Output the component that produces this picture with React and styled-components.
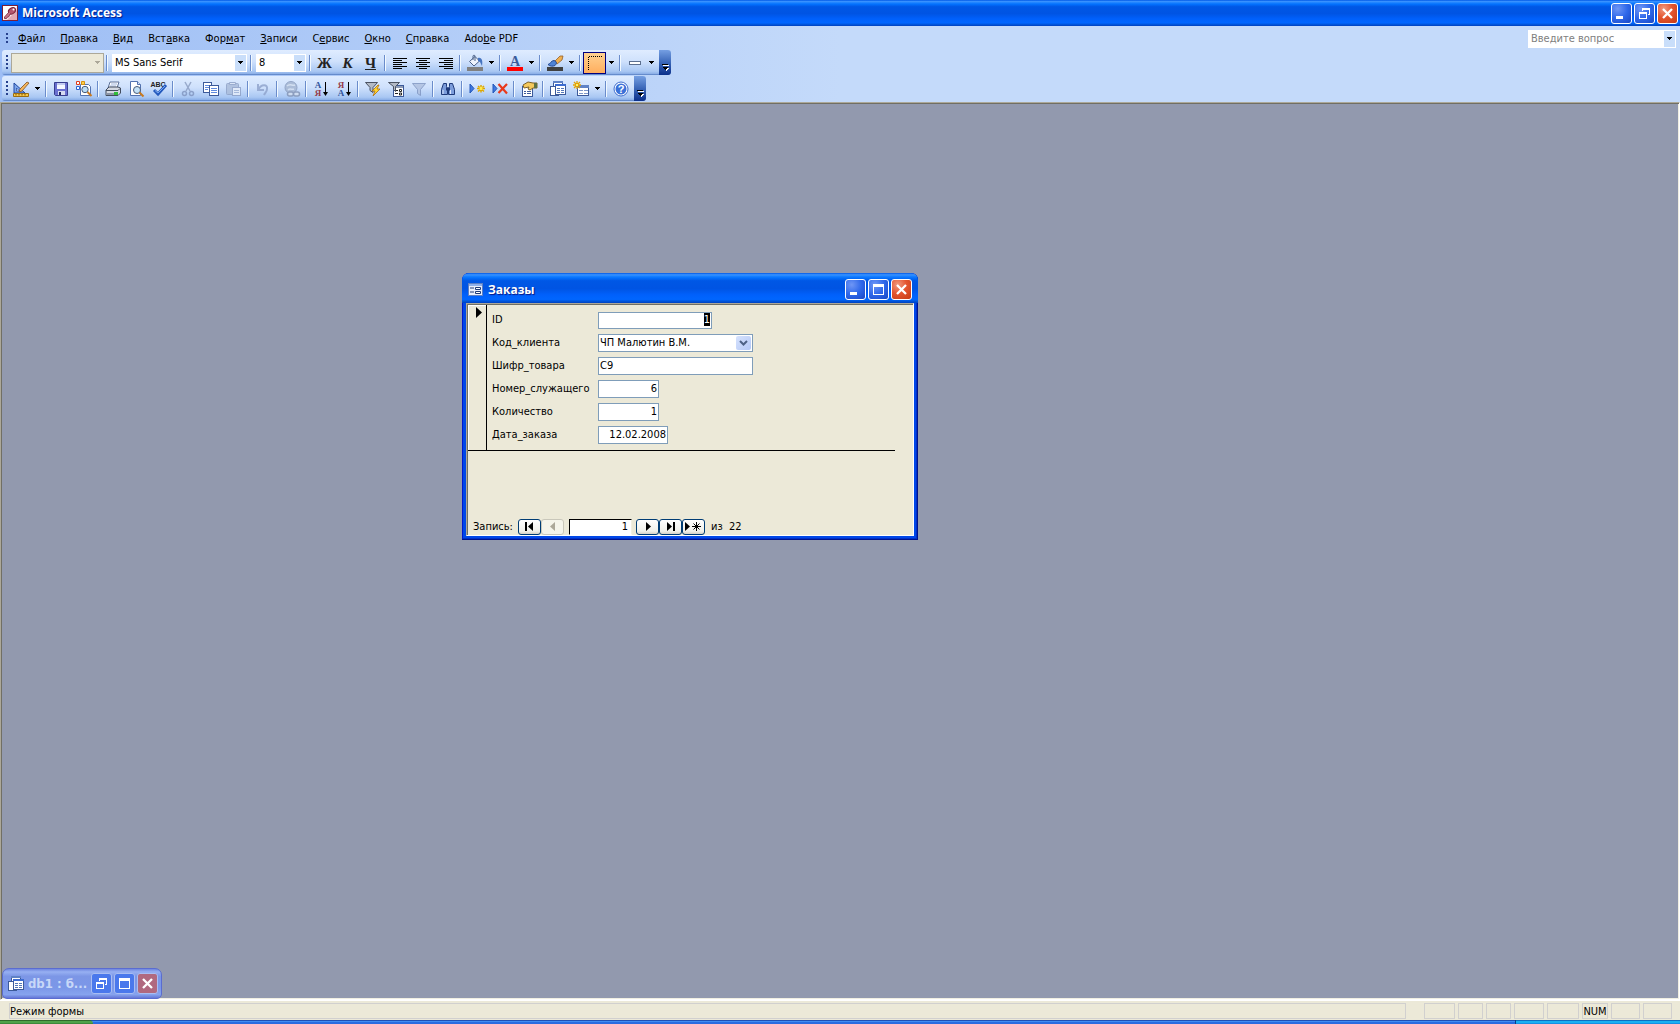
import React, { Component, createRef } from 'react'
import styled, { createGlobalStyle, css } from 'styled-components'

const uiFont = '"DejaVu Sans Condensed", "Liberation Sans", sans-serif'
const titleFont = '"Open Sans", "Noto Sans", sans-serif'

const GlobalStyle = createGlobalStyle`
    * {
        box-sizing: border-box;
    }

    body {
        margin: 0;
        font: 11px/14px ${uiFont};
        color: #000;
    }

    svg {
        display: block;
        overflow: visible;
    }

    button, input, select {
        font: inherit;
        color: inherit;
        margin: 0;
        padding: 0;
        border: 0;
        outline: none;
    }
`

const Screen = styled.div`
    display: flex;
    flex-direction: column;
    height: 100vh;
    background: #ece9d8;
    overflow: hidden;
`

/* ---------- window chrome ---------- */

const blueTitle = css`
    background: linear-gradient(180deg, #0058e6 0%, #3a93ff 6%, #127dff 12%, #036ffc 17%, #0057e5 26%, #0054e3 52%, #0060fb 72%, #0066ff 88%, #0052d6 95%, #0040c0 100%);
`

const AppTitle = styled.header`
    ${blueTitle}
    display: flex;
    align-items: center;
    gap: 4px;
    height: 26px;
    padding: 0 2px;
    flex: none;
`

const TitleText = styled.h1`
    flex: 1;
    margin: 0;
    font: bold 12px/20px ${titleFont};
    color: #fff;
    text-shadow: 1px 1px 1px #0a1883;
    white-space: nowrap;
`

const MinimizedTitle = styled.h2`
    flex: 1;
    margin: 0;
    font: bold 13px/20px ${uiFont};
    color: #c8d8f8;
    white-space: nowrap;
`

const WindowButtons = styled.div`
    display: flex;
    gap: 2px;
`

const CaptionButton = styled.button`
    width: 21px;
    height: 21px;
    display: grid;
    place-items: center;
    border: 1px solid ${props => props.$faded ? '#a9bdf2' : '#fff'};
    border-radius: 3px;
    background: ${props => props.$close
        ? (props.$faded ? '#b0697f' : 'radial-gradient(circle at 30% 25%, #f09a80 0%, #e4552f 45%, #c53a12 100%)')
        : (props.$faded ? '#4a78ec' : 'radial-gradient(circle at 30% 25%, #6f96f5 0%, #2f68ea 50%, #1846c4 100%)')};
`

/* ---------- menu and toolbars ---------- */

const Dock = styled.div`
    flex: none;
    display: flex;
    flex-direction: column;
    align-items: flex-start;
    height: 76px;
    background: linear-gradient(90deg, #9ebef5 0%, #c4dafa 50%);
`

const MenuBar = styled.nav`
    align-self: stretch;
    display: flex;
    align-items: center;
    height: 25px;
    padding: 1px 3px 0 6px;
`

const MenuItems = styled.div`
    flex: 1;
    display: flex;
    padding-left: 2px;
`

const MenuItem = styled.button`
    padding: 0 8px 0 7px;
    background: none;
    white-space: nowrap;
`

const Grip = styled.i`
    width: 3px;
    height: ${props => props.$short ? 12 : 16}px;
    background: repeating-linear-gradient(180deg, #27418d 0 2px, transparent 2px 4px);
    background-size: 2px 100%;
    background-repeat: no-repeat;
`

const Bar = styled.div`
    display: flex;
    align-items: center;
    height: 25px;
    margin: 0 0 1px 2px;
    padding-left: 4px;
    border-radius: 3px 4px 4px 3px;
    background: linear-gradient(180deg, #dfecff 0%, #cfe1fc 45%, #a9c7f3 85%, #8fb2e9 94%, #5178bd 100%);
`

const BarItems = styled.div`
    display: flex;
    align-items: center;
    padding-right: 2px;
`

const ToolButton = styled.button`
    width: 23px;
    height: 22px;
    display: grid;
    place-items: center;
    background: ${props => props.$on ? 'linear-gradient(180deg, #ffd190 0%, #ffae5e 100%)' : 'none'};
    border: ${props => props.$on ? '1px solid #000080' : '0'};
    opacity: ${props => props.disabled ? 0.8 : 1};
`

const FormatLetter = styled.span`
    font: bold 15px/18px "Liberation Serif", serif;
    color: #222;
    font-style: ${props => props.$italic ? 'italic' : 'normal'};
    text-decoration: ${props => props.$under ? 'underline' : 'none'};
`

const DropButton = styled.button`
    width: 11px;
    height: 22px;
    display: grid;
    place-items: center;
    background: none;
`

const Separator = styled.i`
    width: 2px;
    height: 16px;
    margin: 0 2px;
    border-left: 1px solid #6a8ccb;
    border-right: 1px solid #f1f9ff;
`

const BarEnd = styled.button`
    width: 12px;
    height: 25px;
    display: grid;
    place-items: end center;
    padding-bottom: 3px;
    border-radius: 0 3px 3px 0;
    background: linear-gradient(180deg, #759fe2 0%, #3a66b8 50%, #0a2f8a 100%);
`

const ComboFrame = styled.label`
    display: grid;
    align-items: center;
    width: ${props => props.$width}px;
    height: ${props => props.$disabled ? 20 : 18}px;
    margin: 0 ${props => props.$disabled ? 0 : 1}px 0 2px;
    border: 1px solid ${props => props.$disabled ? '#aca899' : '#fff'};
    background: ${props => props.$disabled ? '#ece9d8' : '#fff'};

    select {
        grid-area: 1 / 1;
        width: 100%;
        height: 16px;
        padding: 0 14px 0 2px;
        appearance: none;
        background: transparent;
        color: ${props => props.$muted ? '#808080' : '#000'};
        opacity: 1;
    }
`

const ComboArrow = styled.span`
    grid-area: 1 / 1;
    justify-self: end;
    display: grid;
    place-items: center;
    width: 11px;
    height: 100%;
    background: ${props => props.$disabled ? 'none' : '#c9defa'};
    pointer-events: none;
`

/* ---------- workspace ---------- */

const Workspace = styled.main`
    flex: 1;
    position: relative;
    min-height: 0;
    border: 1px solid;
    border-color: #aca899 #fff #fff #aca899;
    background: #9299ae;
    box-shadow: inset 1px 1px #716f64, inset -1px -1px #f1efe2;
`

const FormWindow = styled.section`
    position: absolute;
    left: 461px;
    top: 170px;
    width: 456px;
    height: 267px;
    display: flex;
    flex-direction: column;
    border-radius: 7px 7px 0 0;
    background: #0047e8;
    box-shadow: inset -1px -1px #00138c, inset 1px 0 #0019cf, inset -2px -2px #0030c8;
    overflow: hidden;
`

const FormTitle = styled.header`
    ${blueTitle}
    flex: none;
    display: flex;
    align-items: center;
    gap: 4px;
    height: 30px;
    padding: 3px 6px 0 6px;
`

const Client = styled.div`
    flex: 1;
    display: flex;
    flex-direction: column;
    margin: 0 4px 4px 4px;
    border: 1px solid;
    border-color: #aca899 #fff #fff #aca899;
    background: #ece9d8;
    box-shadow: inset 1px 1px #716f64;
    padding: 1px 0 0 1px;
`

const Detail = styled.div`
    display: flex;
    margin-right: 18px;
    height: 146px;
    border-bottom: 1px solid #000;
`

const RecordSelector = styled.button`
    width: 19px;
    display: flex;
    justify-content: center;
    align-items: flex-start;
    padding: 2px 0 0 3px;
    background: #ece9d8;
    border-right: 1px solid #000;
    box-shadow: inset 1px 1px #fff;
`

const Fields = styled.form`
    padding: 6px 0 0 5px;
`

const FieldRow = styled.div`
    display: flex;
    align-items: center;
    height: 18px;
    margin-bottom: 5px;

    label {
        width: 106px;
        line-height: 18px;
        white-space: nowrap;
    }
`

const fieldBox = css`
    width: ${props => props.$width}px;
    height: ${props => props.$short ? 17 : 18}px;
    border: 1px solid #7f9db9;
    background: #fff;
`

const FieldInput = styled.input`
    ${fieldBox}
    padding: 0 1px 2px;
    text-align: ${props => props.$right ? 'right' : 'left'};

    &::selection {
        background: #000;
        color: #fff;
    }
`

const FieldCombo = styled.div`
    ${fieldBox}
    display: grid;
    align-items: center;

    select {
        grid-area: 1 / 1;
        width: 100%;
        height: 16px;
        padding: 0 18px 1px 1px;
        appearance: none;
        background: transparent;
    }
`

const FieldArrow = styled.span`
    grid-area: 1 / 1;
    justify-self: end;
    display: grid;
    place-items: center;
    width: 15px;
    height: 14px;
    margin-right: 1px;
    border-radius: 2px;
    background: linear-gradient(135deg, #d6e2fd 0%, #b4c8f6 100%);
    pointer-events: none;
`

const RecordNav = styled.div`
    display: flex;
    align-items: center;
    margin-top: auto;
    padding-left: 5px;
    height: 17px;

    label {
        width: 45px;
        white-space: nowrap;
    }
`

const NavButton = styled.button`
    width: 23px;
    height: 16px;
    display: grid;
    place-items: center;
    border: 1px solid ${props => props.disabled ? '#c9c7ba' : '#003c74'};
    border-radius: 3px;
    background: ${props => props.disabled ? '#f5f4ea' : 'linear-gradient(180deg, #fff 0%, #f0f0ea 80%, #d6d0c5 100%)'};
`

const NavInput = styled.input`
    width: 63px;
    height: 16px;
    margin: 0 4px 0 5px;
    padding: 0 3px 0 2px;
    border: 1px solid;
    border-color: #000 #f1efe2 #fff #000;
    background: #fff;
    text-align: right;
`

const NavTotal = styled.span`
    margin-left: 6px;
    white-space: pre;
`

const MinimizedWindow = styled.section`
    position: absolute;
    left: 1px;
    bottom: 0;
    width: 160px;
    height: 31px;
    display: flex;
    align-items: center;
    gap: 4px;
    padding: 0 4px 0 5px;
    border: 1px solid #5a6cd0;
    border-radius: 7px 7px 5px 5px;
    background: linear-gradient(180deg, #6f86df 0%, #97b0f2 10%, #7c96e6 25%, #7b97e8 65%, #86a3ee 88%, #6476d6 100%);
`

/* ---------- status bar ---------- */

const StatusBar = styled.footer`
    flex: none;
    display: flex;
    gap: 3px;
    height: 20px;
    padding: 2px 8px 1px 9px;
    border-top: 1px solid #fff;
    background: #ece9d8;
`

const StatusPane = styled.span`
    flex: ${props => props.$width ? 'none' : 1};
    width: ${props => props.$width}px;
    margin-right: ${props => props.$width ? 0 : 15}px;
    border: 1px solid #d1d0cf;
    line-height: 15px;
    text-align: ${props => props.$width ? 'center' : 'left'};
    white-space: nowrap;
`

const Taskbar = styled.div`
    flex: none;
    display: flex;
    height: 4px;
    background: linear-gradient(180deg, #1f50b4 0 1px, #3f8cf3 1px 2px, #2a6be0 2px 4px);
`

const StartEdge = styled.i`
    width: 93px;
    border-radius: 0 4px 0 0;
    background: linear-gradient(180deg, #2f6a2c 0 1px, #4fa24a 1px 3px, #3c8a3b 3px);
`

const TrayEdge = styled.i`
    width: 165px;
    margin-left: auto;
    border-left: 1px solid #0b3f86;
    background: linear-gradient(180deg, #0f6fc0 0 1px, #1ab0f2 1px 3px, #1690e4 3px);
`

/* ---------- icons ---------- */

const Svg = ({ w = 16, h = 16, children, ...rest }) => (
    <svg width={w} height={h} viewBox={`0 0 ${w} ${h}`} aria-hidden="true" {...rest}>{children}</svg>
)

const DownArrow = ({ color = '#000' }) => (
    <Svg w={5} h={3} shapeRendering="crispEdges"><path d="M0 0h5v1H4v1H3v1H2V2H1V1H0z" fill={color} /></Svg>
)

const sheet = (x, y, w, h, fill = '#fff', line = '#3c5a9a') => (
    <rect x={x + 0.5} y={y + 0.5} width={w} height={h} fill={fill} stroke={line} />
)

const icons = {
    access: (
        <Svg>
            <rect x="0.5" y="0.5" width="15" height="15" fill="#f6e3e7" stroke="#7c2038" />
            <path d="M1 1h14L1 15z" fill="#fff" />
            <path d="M15 5v10H5z" fill="#e0a9b5" />
            <ellipse cx="10" cy="5.800" rx="3.800" ry="2.800" transform="rotate(-35 10 5.800)" fill="#b5566e" stroke="#7c2038" />
            <circle cx="11.500" cy="4.500" r="1" fill="#fff" />
            <path d="M7 7l-4.500 5v1.500h2l1-1.500h1l2-3.500" fill="#c9788b" stroke="#7c2038" strokeWidth="0.8" />
        </Svg>
    ),
    form: (
        <Svg>
            <rect x="0.5" y="1.500" width="14" height="12" fill="#e9eefb" stroke="#5c7fc4" />
            <path d="M1 2h13v2H1z" fill="#8fb0ea" />
            <path d="M2 6h4M2 10h4" stroke="#203c78" />
            <path d="M7.500 5.500h5v2h-5zM7.500 9.500h5v2h-5z" fill="#fff" stroke="#203c78" />
        </Svg>
    ),
    minimize: <Svg w={13} h={13}><path d="M1 9h7v3H1z" fill="#fff" /></Svg>,
    restore: <Svg w={13} h={13}><path d="M4 1h8v7h-2V7h1V3H5v1H4zM1 5h8v7H1zm1 2v4h6V7z" fill="#fff" fillRule="evenodd" /></Svg>,
    maximize: <Svg w={13} h={13}><path d="M1 1h11v11H1zm1 3v7h9V4z" fill="#fff" fillRule="evenodd" /></Svg>,
    close: <Svg w={13} h={13}><path d="M2 2l9 9M11 2l-9 9" stroke="#fff" strokeWidth="2.300" /></Svg>,
    left: <Svg shapeRendering="crispEdges"><path d="M1 3h14v1H1zM1 5h9v1H1zM1 7h14v1H1zM1 9h9v1H1zM1 11h14v1H1zM1 13h9v1H1z" /></Svg>,
    center: <Svg shapeRendering="crispEdges"><path d="M1 3h14v1H1zM4 5h8v1H4zM1 7h14v1H1zM4 9h8v1H4zM1 11h14v1H1zM4 13h8v1H4z" /></Svg>,
    right: <Svg shapeRendering="crispEdges"><path d="M1 3h14v1H1zM6 5h9v1H6zM1 7h14v1H1zM6 9h9v1H6zM1 11h14v1H1zM6 13h9v1H6z" /></Svg>,
    fill: (
        <Svg>
            <path d="M2.500 6.500L8 1.500l4.500 4.500L7 11z" fill="#eef3fc" stroke="#4b6087" />
            <path d="M6 5V1c0-1 2-1 2 0v5" fill="none" stroke="#4b6087" />
            <path d="M11 3c4-1 5 3 4 8l-2-4-2-1z" fill="#4674c0" />
            <path d="M0 12h16v4H0z" fill="#808080" />
        </Svg>
    ),
    fontColor: (
        <Svg>
            <text x="8" y="11" textAnchor="middle" fontFamily="Liberation Serif" fontWeight="bold" fontSize="14" fill="#3a5c9c">A</text>
            <path d="M0 12h16v4H0z" fill="#f00" />
        </Svg>
    ),
    lineColor: (
        <Svg>
            <path d="M8 6l5-5 3 0-1 4-5 4z" fill="#f0b050" stroke="#94602a" strokeWidth="0.8" />
            <path d="M1 9.500c2 0 3-4 6-4 3 1 3 3 1 5-2 1-5 1-7-1z" fill="#4e83d6" stroke="#27498e" />
            <path d="M0 12h16v4H0z" fill="#404040" />
        </Svg>
    ),
    dots: (
        <Svg>
            <path d="M1.500 15V1.500M2 1.500h13" fill="none" stroke="#000" strokeDasharray="1 1" shapeRendering="crispEdges" />
        </Svg>
    ),
    line: <Svg><rect x="2.500" y="6.500" width="11" height="3" fill="#fff" stroke="#5c6f8f" /></Svg>,
    design: (
        <Svg>
            <path d="M1 2v10h11z" fill="#7ba4ea" stroke="#1e46a0" />
            <path d="M3.500 7v3h3z" fill="#e6effd" stroke="#1e46a0" strokeWidth="0.7" />
            <path d="M14 1l2 1-7 8-3 1 1-3z" fill="#f5b65c" stroke="#805020" strokeWidth="0.8" />
            <path d="M0.500 12.500h15v3h-15z" fill="#f7c84a" stroke="#9a6c12" />
            <path d="M3 13v1.500M6 13v1.500M9 13v1.500M12 13v1.500" stroke="#7a5208" />
        </Svg>
    ),
    save: (
        <Svg>
            <path d="M1.500 1.500h13v13h-12l-1-1z" fill="#6a70d0" stroke="#373d8e" />
            <path d="M4 2h8v6H4z" fill="#f4f7ff" />
            <path d="M4 2h8v2H4z" fill="#c3ccf0" />
            <path d="M5 10h7v4H5z" fill="#d5daf0" />
            <path d="M6 11h2v3H6z" fill="#20265e" />
        </Svg>
    ),
    search: (
        <Svg>
            <path d="M4.500 3.500h8l2 2v9h-10z" fill="#fff" stroke="#5373b0" />
            <path d="M0.500 0.500h3v3h-3z" fill="#fff" stroke="#e03c1c" />
            <path d="M5.500 0.500h3v3h-3z" fill="#fbd24a" stroke="#d89210" />
            <path d="M0.500 5.500h3v3h-3z" fill="#fff" stroke="#2f62d0" />
            <circle cx="9" cy="8.500" r="3.200" fill="#b9ddf7" stroke="#4b5c78" />
            <path d="M11.500 11l4 4" stroke="#c8791e" strokeWidth="2" />
        </Svg>
    ),
    print: (
        <Svg>
            <path d="M5 1h9l-2 6H3z" fill="#fff" stroke="#5c7098" />
            <path d="M6 3h6M5 5h6" stroke="#8ba5d6" strokeWidth="0.8" />
            <path d="M1 9l3-3h9l2.500 1v5L13 14.500H1z" fill="#d4d9e2" stroke="#424c5e" />
            <path d="M1 9.500h12l2-2" fill="none" stroke="#424c5e" />
            <path d="M2 12h10v2H2z" fill="#8b95a8" />
            <path d="M9 11h4v3H9z" fill="#2fbb3a" />
        </Svg>
    ),
    preview: (
        <Svg>
            <path d="M2.500 0.500h7l3 3v11h-10z" fill="#fff" stroke="#5373b0" />
            <path d="M9.500 0.500v3h3" fill="#d4e0f6" stroke="#5373b0" />
            <circle cx="9" cy="9" r="3.500" fill="#c5e3f8" stroke="#4b5c78" />
            <path d="M11.500 11.500l4 4" stroke="#c8791e" strokeWidth="2" />
        </Svg>
    ),
    spelling: (
        <Svg>
            <text x="7" y="6" textAnchor="middle" fontFamily="Liberation Sans" fontWeight="bold" fontSize="7" fill="#222">ABC</text>
            <path d="M3 9l4 4 8-9" fill="none" stroke="#2459bd" strokeWidth="3" />
            <path d="M4 9.500l3 2.500 7-7" fill="none" stroke="#76a5ef" />
        </Svg>
    ),
    cut: (
        <Svg>
            <path d="M5 1l5 9M11 1L6 10" stroke="#8a9cc0" strokeWidth="1.500" />
            <circle cx="4.500" cy="12.500" r="2" fill="none" stroke="#8095bf" strokeWidth="1.500" />
            <circle cx="11.500" cy="12.500" r="2" fill="none" stroke="#8095bf" strokeWidth="1.500" />
        </Svg>
    ),
    copy: (
        <Svg>
            {sheet(0, 1, 8, 10)}
            <path d="M2 4.500h5M2 6.500h5M2 8.500h3" stroke="#5f8ade" />
            {sheet(6, 4, 9, 10)}
            <path d="M8 7.500h6M8 9.500h6M8 11.500h6" stroke="#5f8ade" />
        </Svg>
    ),
    paste: (
        <Svg>
            <rect x="0.5" y="2.500" width="12" height="11" rx="1" fill="#a9bbd9" stroke="#8c9fc4" />
            <path d="M3.500 1.500h6v2h-6z" fill="#dce6f5" stroke="#8c9fc4" />
            {sheet(6, 6, 8, 8, '#e7eef9', '#8c9fc4')}
            <path d="M8 9.500h5M8 11.500h5" stroke="#9fb1d3" />
        </Svg>
    ),
    undo: <Svg><path d="M3 3v6h6M3.500 8.500C6 3 13 3 12 8c0 3-2 4-3 6" fill="none" stroke="#8ea2cb" strokeWidth="2" /></Svg>,
    link: (
        <Svg>
            <circle cx="7" cy="6.500" r="6" fill="#a3b4d0" stroke="#8497bb" />
            <path d="M3 5c3-3 5 0 8-1M4 9c2-2 4 0 6-1" stroke="#d4dfef" fill="none" strokeWidth="1.500" />
            <rect x="3.500" y="11" width="6" height="4" rx="2" fill="#d4dfef" stroke="#8292b2" strokeWidth="1.500" />
            <rect x="9.500" y="11" width="6" height="4" rx="2" fill="#d4dfef" stroke="#8292b2" strokeWidth="1.500" />
        </Svg>
    ),
    funnelBolt: (
        <Svg>
            <path d="M0.500 1.500h12l-4.500 5v5l-3-2v-3z" fill="#b3bac6" stroke="#4a5262" />
            <path d="M13 4L7 10h3l-2 5 7-7h-3l2-4z" fill="#ffd62e" stroke="#b06d0c" strokeWidth="0.8" />
        </Svg>
    ),
    funnelForm: (
        <Svg>
            {sheet(5, 4, 10, 11)}
            <path d="M6 5h9v2H6z" fill="#8d9bb5" />
            <path d="M7 9.500h3M7 12.500h3" stroke="#222" />
            <path d="M11.500 8.500h2v2h-2zM11.500 12h2v2h-2z" fill="#fff" stroke="#222" />
            <path d="M0.500 1.500h11l-4 4v5l-2-2v-3z" fill="#b3bac6" stroke="#4a5262" />
        </Svg>
    ),
    funnel: <Svg><path d="M1.500 2.500h13l-5 6v6l-3-2v-4z" fill="#aebfdf" stroke="#7d93bf" /></Svg>,
    binoculars: (
        <Svg>
            <path d="M3.500 2.500h3v3l1 2v6h-6v-5zM9.500 2.500h3l2 6v5h-6v-6l1-2z" fill="#7c9ddb" stroke="#1f3a7a" />
            <path d="M6 6.500h4v3H6z" fill="#1f3a7a" />
            <path d="M3 9v4M10.500 9v4" stroke="#dce8ff" />
        </Svg>
    ),
    newRecord: (
        <Svg>
            <path d="M1 3v9l4-4.500z" fill="#3f78e0" stroke="#2356b8" />
            <path d="M12 4v7.500M8 7.500h8M9 5l6 5.500M15 5l-6 5.500" stroke="#e0a800" strokeWidth="1.500" />
            <path d="M10.500 6h3v3h-3z" fill="#ffe94a" />
        </Svg>
    ),
    deleteRecord: (
        <Svg>
            <path d="M1 3v9l4-4.500z" fill="#3f78e0" stroke="#2356b8" />
            <path d="M6.500 3l8.500 9.500M15 3l-8.500 9" stroke="#e8391c" strokeWidth="2.200" />
        </Svg>
    ),
    properties: (
        <Svg>
            {sheet(1, 5, 10, 10)}
            <path d="M3 10h2v1H3zM3 12h2v1H3zM6 10h4v1H6zM6 12h4v1H6z" fill="#3c5a9a" />
            <path d="M2 4l5-3 5 1h4v5h-4L9 9 7 8l1-2-5 1z" fill="#f5c95c" stroke="#7d6128" />
            <path d="M13 2h3v5h-3z" fill="#5e7242" />
        </Svg>
    ),
    dbWindow: (
        <Svg>
            {sheet(3, 0, 9, 9)}
            <path d="M3 0h10v2H3z" fill="#5f82c6" />
            {sheet(0, 5, 8, 9)}
            {sheet(5, 3, 10, 10)}
            <path d="M5 3h11v2H5z" fill="#3d6cd0" />
            <path d="M7 7.500h3M11 7.500h3M7 9.500h3M11 9.500h3M7 11.500h3M11 11.500h3" stroke="#5577b8" />
        </Svg>
    ),
    newObject: (
        <Svg>
            {sheet(4, 4, 11, 10)}
            <path d="M4 4h12v3H4z" fill="#5f82c6" />
            <path d="M6 9.500h4M11 9.500h4M6 12.500h4M11 12.500h4" stroke="#7d96c8" />
            <path d="M4 0v8M0 4h8M1 1l6 6M7 1l-6 6" stroke="#e3a200" strokeWidth="1.300" />
            <path d="M3 3h2v2H3z" fill="#fff26a" />
        </Svg>
    ),
    help: (
        <Svg>
            <circle cx="8" cy="8" r="7" fill="#fff" stroke="#3d6ccc" />
            <circle cx="8" cy="8" r="5.500" fill="#3a70d8" />
            <text x="8" y="12" textAnchor="middle" fontFamily="Liberation Sans" fontWeight="bold" fontSize="11" fill="#fff">?</text>
        </Svg>
    ),
}

const SortIcon = ({ top, bottom, desc }) => (
    <Svg>
        <text x="5" y="7" textAnchor="middle" fontFamily="Liberation Serif" fontWeight="bold" fontSize="9" fill={desc ? '#943a48' : '#31549c'}>{top}</text>
        <text x="5" y="15" textAnchor="middle" fontFamily="Liberation Serif" fontWeight="bold" fontSize="9" fill={desc ? '#31549c' : '#943a48'}>{bottom}</text>
        <path d="M12.500 1v12" stroke="#000" />
        <path d="M10 11h5l-2.500 4z" />
    </Svg>
)

const EndIcon = () => (
    <Svg w={7} h={8} shapeRendering="crispEdges">
        <path d="M1 1h6v1H1zM2 4h5v1H6v1H5v1H4V6H3V5H2z" fill="#fff" />
        <path d="M0 0h6v1H0zM1 3h5v1H5v1H4v1H3V5H2V4H1z" fill="#000" />
    </Svg>
)

const navShapes = {
    first: <path d="M1 1h2v9H1zM9 1v9L4 5.500z" />,
    prev: <path d="M8 1v9L3 5.500z" fill="#aca899" />,
    next: <path d="M4 1v9l5-4.500z" />,
    last: <path d="M2 1v9l5-4.500zM8 1h2v9H8z" />,
    create: (
        <g>
            <path d="M0 1v9l5-4.500z" />
            <path d="M11.500 1v9M7 5.500h9M8.500 2.500l6 6M14.500 2.500l-6 6" stroke="#000" />
        </g>
    ),
}

const NavIcon = ({ name }) => <Svg w={name === 'create' ? 17 : 12} h={11}>{navShapes[name]}</Svg>

/* ---------- pieces ---------- */

const Tool = ({ icon, label, ...rest }) => (
    <ToolButton type="button" aria-label={label} {...rest}>{icons[icon]}</ToolButton>
)

const Drop = ({ label }) => (
    <DropButton type="button" aria-label={label}><DownArrow /></DropButton>
)

const Combo = ({ label, value, width, muted, disabled }) => (
    <ComboFrame $width={width} $muted={muted} $disabled={disabled}>
        <select aria-label={label} disabled={disabled} defaultValue={value}>
            <option>{value}</option>
        </select>
        <ComboArrow $disabled={disabled}><DownArrow color={disabled ? '#aca899' : '#000'} /></ComboArrow>
    </ComboFrame>
)

const Caption = ({ buttons, faded }) => (
    <WindowButtons>
        {buttons.map(name => (
            <CaptionButton key={name} type="button" aria-label={name} $close={name === 'close'} $faded={faded}>
                {icons[name]}
            </CaptionButton>
        ))}
    </WindowButtons>
)

const menu = [
    ['', 'Ф', 'айл'],
    ['', 'П', 'равка'],
    ['', 'В', 'ид'],
    ['Вст', 'а', 'вка'],
    ['Фор', 'м', 'ат'],
    ['', 'З', 'аписи'],
    ['С', 'е', 'рвис'],
    ['', 'О', 'кно'],
    ['', 'С', 'правка'],
    ['Ado', 'b', 'e PDF'],
]

const statusPanes = [['', 31], ['', 25], ['', 25], ['', 30], ['', 32], ['NUM', 26], ['', 29], ['', 29]]

class App extends Component {

    state = {
        id: '1',
        code: 'С9',
        employee: '6',
        amount: '1',
        date: '12.02.2008',
        record: '1'
    }

    idInput = createRef()

    componentDidMount() {
        this.idInput.current.focus()
        this.idInput.current.select()
    }

    handleChange = (event) => {
        this.setState({ [event.target.name]: event.target.value })
    }

    renderField(name, label, width, right) {
        return (
            <FieldRow>
                <label htmlFor={name}>{label}</label>
                <FieldInput
                    id={name}
                    name={name}
                    type="text"
                    ref={name === 'id' ? this.idInput : null}
                    $width={width}
                    $right={right}
                    $short={name === 'id'}
                    value={this.state[name]}
                    onChange={this.handleChange}
                />
            </FieldRow>
        )
    }

    render() {
        return (
            <Screen>
                <GlobalStyle />
                <AppTitle>
                    {icons.access}
                    <TitleText>Microsoft Access</TitleText>
                    <Caption buttons={['minimize', 'restore', 'close']} />
                </AppTitle>

                <Dock>
                    <MenuBar>
                        <Grip $short />
                        <MenuItems>
                            {menu.map(([before, key, after]) => (
                                <MenuItem key={before + key + after} type="button">{before}<u>{key}</u>{after}</MenuItem>
                            ))}
                        </MenuItems>
                        <Combo label="Вопрос" value="Введите вопрос" width={148} muted />
                    </MenuBar>

                    <Bar>
                        <Grip />
                        <BarItems>
                            <Combo label="Объект" value="" width={93} disabled />
                            <Separator />
                            <Combo label="Шрифт" value="MS Sans Serif" width={135} />
                            <Separator />
                            <Combo label="Размер" value="8" width={50} />
                            <Separator />
                            <ToolButton type="button"><FormatLetter>Ж</FormatLetter></ToolButton>
                            <ToolButton type="button"><FormatLetter $italic>К</FormatLetter></ToolButton>
                            <ToolButton type="button"><FormatLetter $under>Ч</FormatLetter></ToolButton>
                            <Separator />
                            <Tool icon="left" label="По левому краю" />
                            <Tool icon="center" label="По центру" />
                            <Tool icon="right" label="По правому краю" />
                            <Separator />
                            <Tool icon="fill" label="Цвет заливки" />
                            <Drop label="Цвета заливки" />
                            <Separator />
                            <Tool icon="fontColor" label="Цвет текста" />
                            <Drop label="Цвета текста" />
                            <Separator />
                            <Tool icon="lineColor" label="Цвет линии" />
                            <Drop label="Цвета линии" />
                            <Separator />
                            <Tool icon="dots" label="Толщина линии" $on />
                            <Drop label="Варианты толщины" />
                            <Separator />
                            <Tool icon="line" label="Оформление" />
                            <Drop label="Варианты оформления" />
                        </BarItems>
                        <BarEnd type="button" aria-label="Параметры панели"><EndIcon /></BarEnd>
                    </Bar>

                    <Bar>
                        <Grip />
                        <BarItems>
                            <Tool icon="design" label="Вид" />
                            <Drop label="Режимы" />
                            <Separator />
                            <Tool icon="save" label="Сохранить" />
                            <Tool icon="search" label="Найти файл" />
                            <Separator />
                            <Tool icon="print" label="Печать" />
                            <Tool icon="preview" label="Просмотр" />
                            <Tool icon="spelling" label="Орфография" />
                            <Separator />
                            <Tool icon="cut" label="Вырезать" disabled />
                            <Tool icon="copy" label="Копировать" />
                            <Tool icon="paste" label="Вставить" disabled />
                            <Separator />
                            <Tool icon="undo" label="Отменить" disabled />
                            <Separator />
                            <Tool icon="link" label="Гиперссылка" disabled />
                            <Separator />
                            <ToolButton type="button" aria-label="По возрастанию"><SortIcon top="А" bottom="Я" /></ToolButton>
                            <ToolButton type="button" aria-label="По убыванию"><SortIcon top="Я" bottom="А" desc /></ToolButton>
                            <Separator />
                            <Tool icon="funnelBolt" label="Фильтр по выделенному" />
                            <Tool icon="funnelForm" label="Изменить фильтр" />
                            <Tool icon="funnel" label="Применить фильтр" disabled />
                            <Separator />
                            <Tool icon="binoculars" label="Найти" />
                            <Separator />
                            <Tool icon="newRecord" label="Новая запись" />
                            <Tool icon="deleteRecord" label="Удалить запись" />
                            <Separator />
                            <Tool icon="properties" label="Свойства" />
                            <Separator />
                            <Tool icon="dbWindow" label="Окно базы данных" />
                            <Tool icon="newObject" label="Новый объект" />
                            <Drop label="Объекты" />
                            <Separator />
                            <Tool icon="help" label="Справка" />
                        </BarItems>
                        <BarEnd type="button" aria-label="Параметры панели"><EndIcon /></BarEnd>
                    </Bar>
                </Dock>

                <Workspace>
                    <FormWindow>
                        <FormTitle>
                            {icons.form}
                            <TitleText as="h2">Заказы</TitleText>
                            <Caption buttons={['minimize', 'maximize', 'close']} />
                        </FormTitle>
                        <Client>
                            <Detail>
                                <RecordSelector type="button" aria-label="Текущая запись">
                                    <Svg w={6} h={11}><path d="M0 0v11l6-5.500z" /></Svg>
                                </RecordSelector>
                                <Fields onSubmit={event => event.preventDefault()}>
                                    {this.renderField('id', 'ID', 114, true)}
                                    <FieldRow>
                                        <label htmlFor="client">Код_клиента</label>
                                        <FieldCombo $width={155}>
                                            <select id="client" defaultValue="ЧП Малютин В.М.">
                                                <option>ЧП Малютин В.М.</option>
                                            </select>
                                            <FieldArrow>
                                                <Svg w={9} h={6}><path d="M1 1l3.500 3.500L8 1" fill="none" stroke="#4d6185" strokeWidth="2" /></Svg>
                                            </FieldArrow>
                                        </FieldCombo>
                                    </FieldRow>
                                    {this.renderField('code', 'Шифр_товара', 155)}
                                    {this.renderField('employee', 'Номер_служащего', 61, true)}
                                    {this.renderField('amount', 'Количество', 61, true)}
                                    {this.renderField('date', 'Дата_заказа', 70, true)}
                                </Fields>
                            </Detail>
                            <RecordNav>
                                <label htmlFor="record">Запись:</label>
                                <NavButton type="button" aria-label="Первая"><NavIcon name="first" /></NavButton>
                                <NavButton type="button" aria-label="Предыдущая" disabled><NavIcon name="prev" /></NavButton>
                                <NavInput id="record" name="record" type="text" value={this.state.record} onChange={this.handleChange} />
                                <NavButton type="button" aria-label="Следующая"><NavIcon name="next" /></NavButton>
                                <NavButton type="button" aria-label="Последняя"><NavIcon name="last" /></NavButton>
                                <NavButton type="button" aria-label="Новая"><NavIcon name="create" /></NavButton>
                                <NavTotal>{'из  22'}</NavTotal>
                            </RecordNav>
                        </Client>
                    </FormWindow>

                    <MinimizedWindow>
                        {icons.dbWindow}
                        <MinimizedTitle>db1 : б...</MinimizedTitle>
                        <Caption buttons={['restore', 'maximize', 'close']} faded />
                    </MinimizedWindow>
                </Workspace>

                <StatusBar>
                    <StatusPane>Режим формы</StatusPane>
                    {statusPanes.map(([text, width], index) => (
                        <StatusPane key={index} $width={width}>{text}</StatusPane>
                    ))}
                </StatusBar>
                <Taskbar>
                    <StartEdge />
                    <TrayEdge />
                </Taskbar>
            </Screen>
        )
    }
}

export default App
